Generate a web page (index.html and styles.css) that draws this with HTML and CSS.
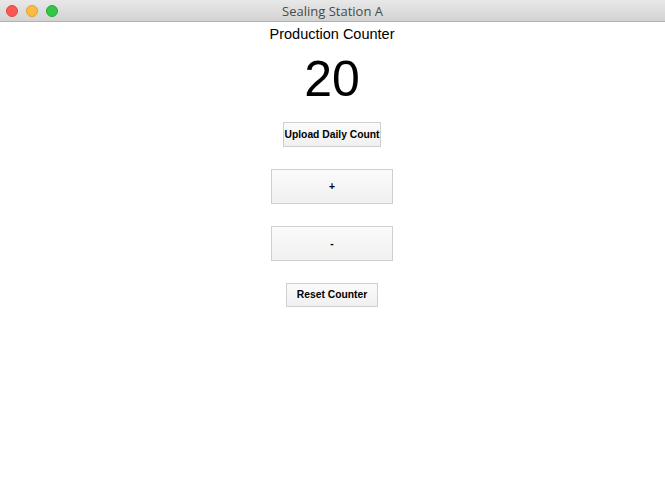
FILE: index.html
```html
<!DOCTYPE html>
<html>
<head>
<meta charset="utf-8">
<link rel="stylesheet" href="styles.css">
</head>
<body>
<div class="window">
  <div class="titlebar">
    <div class="lights">
      <span class="light red"></span>
      <span class="light yellow"></span>
      <span class="light green"></span>
    </div>
    <div class="title">Sealing Station A</div>
  </div>
  <main class="content">
    <div class="heading">Production Counter</div>
    <div class="count">20</div>
    <button class="btn upload">Upload Daily Count</button>
    <button class="btn big">+</button>
    <button class="btn big">-</button>
    <button class="btn reset">Reset Counter</button>
  </main>
</div>
</body>
</html>
```
FILE: styles.css
```css
html, body {
  margin: 0;
  padding: 0;
  background: #ffffff;
  font-family: "Liberation Sans", Arial, sans-serif;
}
.window {
  width: 665px;
  height: 502px;
  display: flex;
  flex-direction: column;
}
.titlebar {
  height: 22px;
  box-sizing: border-box;
  background: linear-gradient(#e8e8e8, #d3d3d3);
  border-bottom: 1px solid #b1b1b1;
  display: flex;
  align-items: center;
  justify-content: center;
  position: relative;
}
.lights {
  position: absolute;
  left: 6px;
  top: 5px;
  display: flex;
  gap: 8px;
}
.light {
  width: 12px;
  height: 12px;
  border-radius: 50%;
  box-sizing: border-box;
}
.red { background: #fc5753; border: 1px solid #df4744; }
.yellow { background: #fdbc40; border: 1px solid #de9f34; }
.green { background: #33c748; border: 1px solid #27aa35; }
.title {
  font-family: "Open Sans", "Liberation Sans", sans-serif;
  font-size: 13px;
  color: #4a4a4a;
}
.content {
  width: 664px;
  display: flex;
  flex-direction: column;
  align-items: center;
}
.heading {
  font-size: 14.5px;
  margin-top: 3px;
  line-height: 18px;
  color: #000;
}
.count {
  font-size: 50px;
  line-height: 50px;
  margin-top: 11px;
  color: #000;
}
.btn {
  font-family: "Liberation Sans", Arial, sans-serif;
  font-weight: bold;
  font-size: 10.3px;
  color: #000;
  background: linear-gradient(#fbfbfb, #f0f0f0);
  border: 1px solid #cfcfcf;
  border-radius: 0;
  padding: 0 0 1px;
  white-space: nowrap;
}
.upload {
  width: 98px;
  height: 25px;
  margin-top: 18px;
}
.big {
  width: 122px;
  height: 35px;
  margin-top: 22px;
}
.reset {
  width: 92px;
  height: 24px;
  margin-top: 22px;
}
```
